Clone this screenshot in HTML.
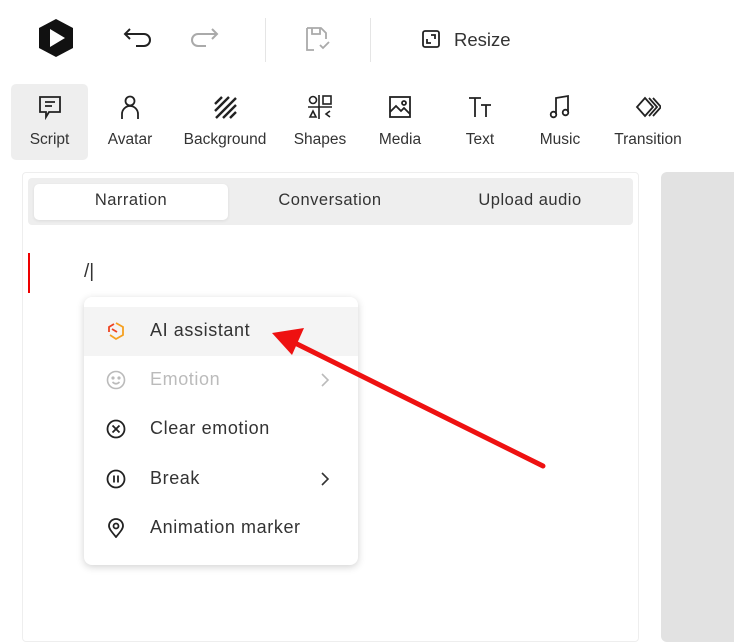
<!DOCTYPE html>
<html><head><meta charset="utf-8"><style>
*{margin:0;padding:0;box-sizing:border-box}
body{width:734px;height:628px;background:#fff;font-family:"Liberation Sans",sans-serif;color:#222;position:relative;overflow:hidden}
.a{position:absolute}
.tb{position:absolute;top:85px;height:75px;text-align:center;font-size:15.5px;color:#333;white-space:nowrap}
.tb svg{display:block;margin:9px auto 11px}
.mi{position:absolute;left:84px;width:274px;height:49px;font-size:18px;letter-spacing:.6px;color:#333}
.mi span{position:absolute;left:66px;top:13px}
.mi svg{position:absolute;left:22px;top:14px}
.chev{position:absolute;right:28px;top:16px}
.tab{position:absolute;top:191px;text-align:center;font-size:16.5px;letter-spacing:.5px;color:#333}
</style></head><body>
<svg class="a" style="left:37px;top:18px" width="38" height="40" viewBox="0 0 38 40"><path d="M19 1 L36 10 V30 L19 39 L2 30 V10 Z" fill="#111"/><path d="M13 11 L28 20 L13 29 Z" fill="#fff"/></svg>
<svg class="a" style="left:122px;top:26px" width="32" height="24" viewBox="0 0 32 24" fill="none" stroke="#222" stroke-width="2"><path d="M8 3 L3 8 L8 13"/><path d="M3 8 H22 a6 6 0 0 1 0 12 H14"/></svg>
<svg class="a" style="left:188px;top:26px" width="32" height="24" viewBox="0 0 32 24" fill="none" stroke="#aaa" stroke-width="2"><path d="M24 3 L29 8 L24 13"/><path d="M29 8 H10 a6 6 0 0 0 0 12 H18"/></svg>
<div class="a" style="left:265px;top:18px;width:1px;height:44px;background:#e5e5e5"></div>
<svg class="a" style="left:304px;top:25px" width="30" height="28" viewBox="0 0 30 28" fill="none" stroke="#aaa" stroke-width="1.8"><path d="M3 3 H17 L22 8 V14 M10 25 H3 V3"/><path d="M8 3 V9 H16 V3"/><path d="M16 20 L19 23 L25 17"/></svg>
<div class="a" style="left:370px;top:18px;width:1px;height:44px;background:#e5e5e5"></div>
<svg class="a" style="left:422px;top:30px" width="18" height="18" viewBox="0 0 18 18" fill="none" stroke="#222" stroke-width="1.8"><rect x="1" y="1" width="16" height="16" rx="2"/><path d="M5 9 V13 H9 M9 5 H13 V9"/></svg>
<div class="a" style="left:454px;top:29px;font-size:18.5px;color:#333">Resize</div>
<div class="a" style="left:11px;top:84px;width:77px;height:76px;background:#eeeeee;border-radius:5px"></div>
<div class="tb" style="left:11px;width:77px"><svg width="26" height="26" viewBox="0 0 26 26" fill="none" stroke="#222" stroke-width="1.8"><path d="M3 3 H23 V18 H12 L9 23 V18 H3 Z"/><path d="M8 8 H18 M8 12 H15"/></svg>Script</div>
<div class="tb" style="left:100px;width:60px"><svg width="26" height="26" viewBox="0 0 26 26" fill="none" stroke="#222" stroke-width="1.8"><circle cx="13" cy="7" r="4.5"/><path d="M5 25 V20 a8 8 0 0 1 16 0 V25"/></svg>Avatar</div>
<div class="tb" style="left:180px;width:90px"><svg width="26" height="26" viewBox="0 0 26 26" fill="none" stroke="#222" stroke-width="2.4"><path d="M3 10 L10 3 M3 17 L17 3 M4 24 L24 4 M11 24 L24 11 M18 24 L24 18"/></svg>Background</div>
<div class="tb" style="left:290px;width:60px"><svg width="26" height="26" viewBox="0 0 26 26" fill="none" stroke="#222" stroke-width="1.6"><circle cx="6" cy="6" r="3.5"/><rect x="16" y="2" width="8" height="8"/><path d="M12 1 V25 M1 13 H25"/><path d="M3 23 L6 17 L9 23 Z M23 17 L19 20 L23 23"/></svg>Shapes</div>
<div class="tb" style="left:370px;width:60px"><svg width="26" height="26" viewBox="0 0 26 26" fill="none" stroke="#222" stroke-width="1.8"><rect x="3" y="3" width="20" height="20"/><path d="M3 18 L9 12 L14 17 L17 14 L23 20"/><circle cx="17" cy="9" r="2"/></svg>Media</div>
<div class="tb" style="left:450px;width:60px"><svg width="26" height="26" viewBox="0 0 26 26" fill="none" stroke="#222" stroke-width="1.8"><path d="M2 4 H14 M8 4 V23 M14 11 H24 M19 11 V23"/></svg>Text</div>
<div class="tb" style="left:530px;width:60px"><svg width="26" height="26" viewBox="0 0 26 26" fill="none" stroke="#222" stroke-width="1.8"><path d="M9 20 V4 L21 2 V18"/><circle cx="6.5" cy="20.5" r="2.8"/><circle cx="18.5" cy="18.5" r="2.8"/></svg>Music</div>
<div class="tb" style="left:610px;width:76px"><svg width="26" height="26" viewBox="0 0 26 26" fill="none" stroke="#222" stroke-width="1.8"><path d="M10 4 L2 13 L10 22 L18 13 Z M14 4 L22 13 L14 22 M18 4 L26 13 L18 22"/></svg>Transition</div>
<div class="a" style="left:22px;top:172px;width:617px;height:470px;border:1px solid #eee;border-radius:4px"></div>
<div class="a" style="left:28px;top:178px;width:605px;height:47px;background:#eeeeee;border-radius:4px"></div>
<div class="a" style="left:34px;top:184px;width:194px;height:36px;background:#fff;border-radius:5px;box-shadow:0 1px 3px rgba(0,0,0,.08)"></div>
<div class="tab" style="left:34px;width:194px">Narration</div>
<div class="tab" style="left:232px;width:196px">Conversation</div>
<div class="tab" style="left:432px;width:196px">Upload audio</div>
<div class="a" style="left:661px;top:172px;width:80px;height:470px;background:#e2e2e2;border-radius:6px"></div>
<div class="a" style="left:28px;top:253px;width:2px;height:40px;background:#e00"></div>
<div class="a" style="left:84px;top:261px;font-size:19px;color:#333">/|</div>
<div class="a" style="left:84px;top:297px;width:274px;height:268px;background:#fff;border-radius:8px;box-shadow:0 2px 8px rgba(0,0,0,.18)"></div>
<div class="a" style="left:84px;top:307px;width:274px;height:49px;background:#f4f4f4"></div>
<div class="mi" style="top:307px"><svg width="20" height="20" viewBox="0 0 20 20" fill="none" stroke-width="1.8"><path d="M10 2 L17 6 V14 L10 18 L4 14" stroke="#f5a020"/><path d="M3 11 V6 L8 3 M6 8 L11 11" stroke="#ee4422"/></svg><span>AI assistant</span></div>
<div class="mi" style="top:356px;color:#bbb"><svg width="20" height="20" viewBox="0 0 20 20" fill="none" stroke="#bbb" stroke-width="1.6"><circle cx="10" cy="10" r="8.5"/><circle cx="7" cy="8" r=".8" fill="#bbb"/><circle cx="13" cy="8" r=".8" fill="#bbb"/><path d="M6.5 12 Q10 15.5 13.5 12"/></svg><span>Emotion</span><svg class="chev" width="10" height="14" viewBox="0 0 10 14" fill="none" stroke="#bbb" stroke-width="1.6" style="left:auto;top:17px"><path d="M2 1 L8 7 L2 13"/></svg></div>
<div class="mi" style="top:405px"><svg width="20" height="20" viewBox="0 0 20 20" fill="none" stroke="#222" stroke-width="1.8"><circle cx="10" cy="10" r="8.5"/><path d="M6.5 6.5 L13.5 13.5 M13.5 6.5 L6.5 13.5"/></svg><span>Clear emotion</span></div>
<div class="mi" style="top:455px"><svg width="20" height="20" viewBox="0 0 20 20" fill="none" stroke="#222" stroke-width="1.8"><circle cx="10" cy="10" r="8.5"/><path d="M8 6.5 V13.5 M12 6.5 V13.5"/></svg><span>Break</span><svg class="chev" width="10" height="14" viewBox="0 0 10 14" fill="none" stroke="#333" stroke-width="1.6" style="left:auto;top:17px"><path d="M2 1 L8 7 L2 13"/></svg></div>
<div class="mi" style="top:504px"><svg width="20" height="20" viewBox="0 0 20 20" fill="none" stroke="#222" stroke-width="1.8"><path d="M10 19 C5 13 3 10.5 3 8 a7 7 0 0 1 14 0 c0 2.5 -2 5 -7 11 Z"/><circle cx="10" cy="8" r="2.5"/></svg><span>Animation marker</span></div>
<svg class="a" style="left:0;top:0" width="734" height="628"><line x1="543" y1="466" x2="295" y2="343" stroke="#ee1111" stroke-width="5" stroke-linecap="round"/><path d="M272 333 L304 328 L292 355 Z" fill="#ee1111"/></svg>
</body></html>
